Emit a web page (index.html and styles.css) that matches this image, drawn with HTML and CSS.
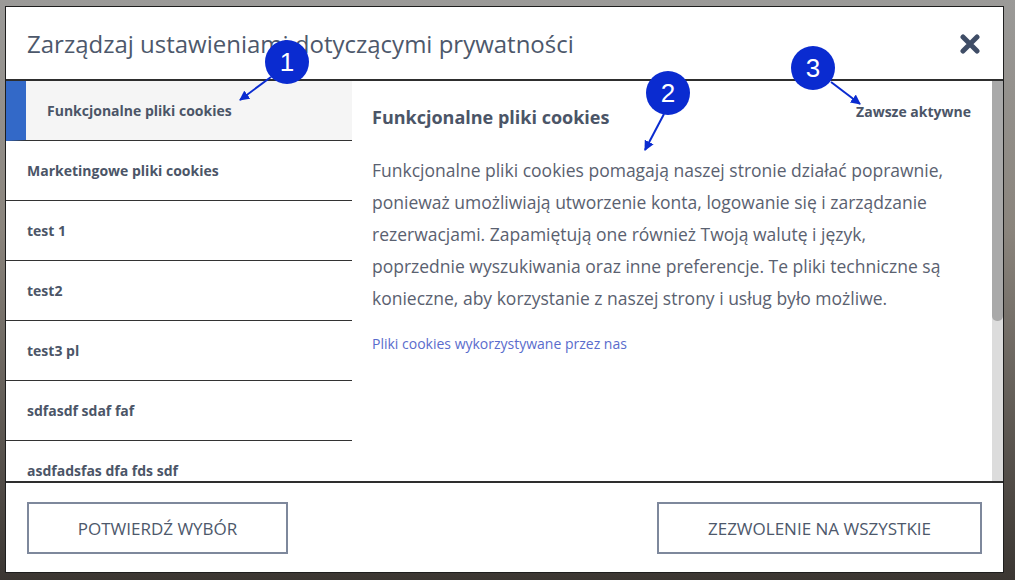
FILE: index.html
```html
<!DOCTYPE html>
<html lang="pl">
<head>
    <meta charset="UTF-8">
    <meta name="viewport" content="width=device-width, initial-scale=1.0">
    <title>Ustawienia prywatności</title>
    <link rel="stylesheet" href="styles.css">
</head>
<body>

    <div class="modal">
        <div class="modal-header">
            <h1 class="modal-title">Zarządzaj ustawieniami dotyczącymi prywatności</h1>
            <svg class="close" width="20" height="20" viewBox="0 0 20 20">
                <path d="M3 3 L17 17 M17 3 L3 17" stroke="#3f4d66" stroke-width="5" stroke-linecap="round"/>
            </svg>
        </div>

        <div class="modal-body">
            <ul class="nav">
                <li class="nav-item active">Funkcjonalne pliki cookies</li>
                <li class="nav-item">Marketingowe pliki cookies</li>
                <li class="nav-item">test 1</li>
                <li class="nav-item">test2</li>
                <li class="nav-item">test3 pl</li>
                <li class="nav-item">sdfasdf sdaf faf</li>
                <li class="nav-item">asdfadsfas dfa fds sdf</li>
            </ul>

            <div class="content">
                <div class="content-head">
                    <h2 class="content-title">Funkcjonalne pliki cookies</h2>
                    <span class="always">Zawsze aktywne</span>
                </div>
                <p class="content-text">
                    Funkcjonalne pliki cookies pomagają naszej stronie działać poprawnie,<br>
                    ponieważ umożliwiają utworzenie konta, logowanie się i zarządzanie<br>
                    rezerwacjami. Zapamiętują one również Twoją walutę i język,<br>
                    poprzednie wyszukiwania oraz inne preferencje. Te pliki techniczne są<br>
                    konieczne, aby korzystanie z naszej strony i usług było możliwe.
                </p>
                <a class="content-link" href="#">Pliki cookies wykorzystywane przez nas</a>
            </div>

            <div class="scrollbar"><div class="thumb"></div></div>
        </div>

        <div class="modal-footer">
            <button class="btn btn-confirm">Potwierdź wybór</button>
            <button class="btn btn-all">Zezwolenie na wszystkie</button>
        </div>
    </div>

    <!-- numbered callouts drawn over the screenshot -->
    <svg class="callouts" width="1015" height="580" viewBox="0 0 1015 580">
        <defs>
            <marker id="head" viewBox="0 0 10 10" refX="9" refY="5" markerWidth="5" markerHeight="5" orient="auto">
                <path d="M0 0 L10 5 L0 10 z" fill="#0a2bd0"/>
            </marker>
        </defs>
        <line x1="271" y1="77" x2="240" y2="100" stroke="#0a2bd0" stroke-width="2" marker-end="url(#head)"/>
        <line x1="664" y1="114" x2="645" y2="150" stroke="#0a2bd0" stroke-width="2" marker-end="url(#head)"/>
        <line x1="831" y1="82" x2="860" y2="104" stroke="#0a2bd0" stroke-width="2" marker-end="url(#head)"/>
        <circle cx="287" cy="62" r="22" fill="#0a2bd0"/>
        <circle cx="668" cy="93" r="22" fill="#0a2bd0"/>
        <circle cx="813" cy="68" r="22" fill="#0a2bd0"/>
        <text x="287" y="71" class="num">1</text>
        <text x="668" y="102" class="num">2</text>
        <text x="813" y="77" class="num">3</text>
    </svg>

</body>
</html>
```

FILE: styles.css
```css
body { margin: 0; padding: 6px 11px 7px 5px; height: 580px; box-sizing: border-box; font-family: "Open Sans", sans-serif; color: #4b5567; background: linear-gradient(#9b9a98 0, #8a847c 40%, #3b3632 100%); overflow: hidden; position: relative; }
.modal { width: 999px; height: 567px; box-sizing: border-box; border: 1px solid #1e1e1e; background: #fff; display: flex; flex-direction: column; }

.modal-header { height: 74px; box-sizing: border-box; border-bottom: 2px solid #2e2e2e; display: flex; align-items: center; justify-content: space-between; padding: 0 23px 0 21px; }
.modal-title { margin: 0; font-size: 24px; font-weight: 400; color: #4d586b; white-space: nowrap; }
.close { flex: none; margin-top: 2px; }

.modal-body { height: 400px; display: flex; overflow: hidden; }
.nav { list-style: none; margin: 0; padding: 0; width: 346px; flex: none; }
.nav-item { height: 60px; box-sizing: border-box; border-bottom: 1px solid #333; display: flex; align-items: center; padding-left: 21px; font-size: 14px; font-weight: 700; color: #4b5567; white-space: nowrap; }
.nav-item.active { background: #f5f5f5; border-left: 20px solid #3369c8; padding-left: 21px; }

.content { flex: 1; padding: 21px 21px 0 20px; }
.content-head { display: flex; justify-content: space-between; align-items: flex-start; }
.content-title { margin: 3px 0 0; font-size: 18px; font-weight: 700; color: #4b5567; }
.always { font-size: 14px; font-weight: 700; color: #4b5567; }
.content-text { margin: 25px 0 18px; font-size: 17.5px; line-height: 32px; color: #5a6170; white-space: nowrap; }
.content-link { font-size: 14px; color: #5a6ccc; text-decoration: none; }

.scrollbar { width: 11px; flex: none; background: #dcdcdc; }
.thumb { height: 240px; background: #a9a9a9; border-radius: 0 0 5px 5px; }

.modal-footer { flex: 1; border-top: 2px solid #2e2e2e; display: flex; justify-content: space-between; align-items: center; padding: 0 21px; }
.btn { height: 52px; background: #fff; border: 2px solid #7e889c; font-family: "Open Sans", sans-serif; font-size: 17px; color: #4d586b; text-transform: uppercase; cursor: pointer; margin-top: 1px; }
.btn-confirm { width: 261px; }
.btn-all { width: 325px; }

.callouts { position: absolute; left: 0; top: 0; pointer-events: none; }
.num { font-family: "Liberation Sans", Arial, sans-serif; font-size: 26px; fill: #fff; text-anchor: middle; }
```
